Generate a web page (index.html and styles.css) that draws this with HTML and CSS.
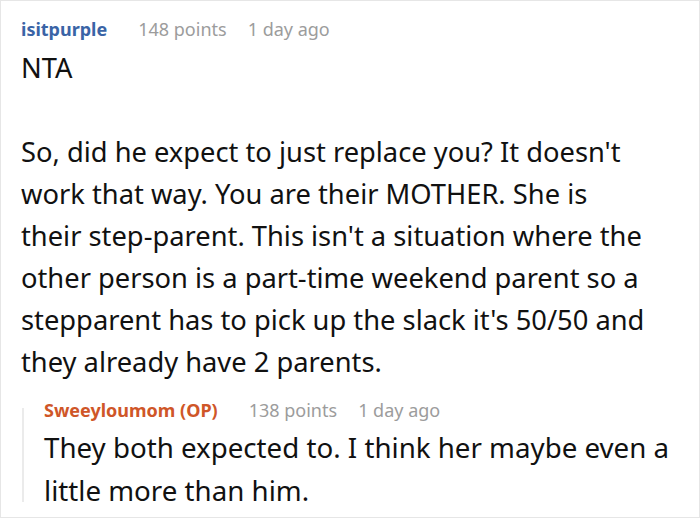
FILE: index.html
```html
<!DOCTYPE html>
<html lang="en">
<head>
    <meta charset="UTF-8">
    <title>Comment</title>
    <link rel="stylesheet" href="styles.css">
</head>
<body>

<div class="comment"> <!-- Top-level comment -->
    <div class="meta">
        <span class="author">isitpurple</span>
        <span class="info">148 points</span>
        <span class="info">1 day ago</span>
    </div>
    <div class="body">
        <p>NTA</p>
        <p>So, did he expect to just replace you? It doesn't<br>
        work that way. You are their MOTHER. She is<br>
        their step-parent. This isn't a situation where the<br>
        other person is a part-time weekend parent so a<br>
        stepparent has to pick up the slack it's 50/50 and<br>
        they already have 2 parents.</p>
    </div>

    <div class="reply"> <!-- Reply from OP -->
        <div class="meta">
            <span class="author op">Sweeyloumom (OP)</span>
            <span class="info">138 points</span>
            <span class="info">1 day ago</span>
        </div>
        <div class="body">
            <p>They both expected to. I think her maybe even a little more than him.</p>
        </div>
    </div>
</div>

</body>
</html>
```

FILE: styles.css
```css
/* Page */
body {
    margin: 0;
    background: #fff;
    font-family: "Noto Sans", "Open Sans", sans-serif;
    color: #111;
}

/* Outer box of the comment */
.comment {
    width: 700px;
    height: 518px;
    box-sizing: border-box;
    border: 1px solid #e6e6e6;
    padding: 15px 20px 0 20px;
    overflow: hidden;
}

/* Header line: name, points, age */
.meta {
    display: flex;
    align-items: baseline;
    gap: 21px;
    font-size: 18px;
    line-height: 26px;
    margin-bottom: 5px;
}
.author {
    font-weight: bold;
    color: #3a64a6;
    margin-right: 10px;
}
.author.op {
    color: #cf5628;
}
.info {
    color: #9c9c9c;
}

/* Comment text */
.body p {
    margin: 0 0 42px 0;
    font-size: 27.3px;
    line-height: 42px;
}
.body p:last-child {
    margin-bottom: 0;
}

/* Reply indented with a thin line */
.reply {
    position: relative;
    margin-top: 14px;
    padding-left: 23px;
}
.reply::before {
    content: "";
    position: absolute;
    left: 1px;
    top: 11px;
    bottom: 10px;
    border-left: 2px solid #ebebeb;
}
.reply .meta {
    margin-bottom: 3px;
}
.reply .body p {
    font-size: 27.7px;
    line-height: 43px;
}
```
